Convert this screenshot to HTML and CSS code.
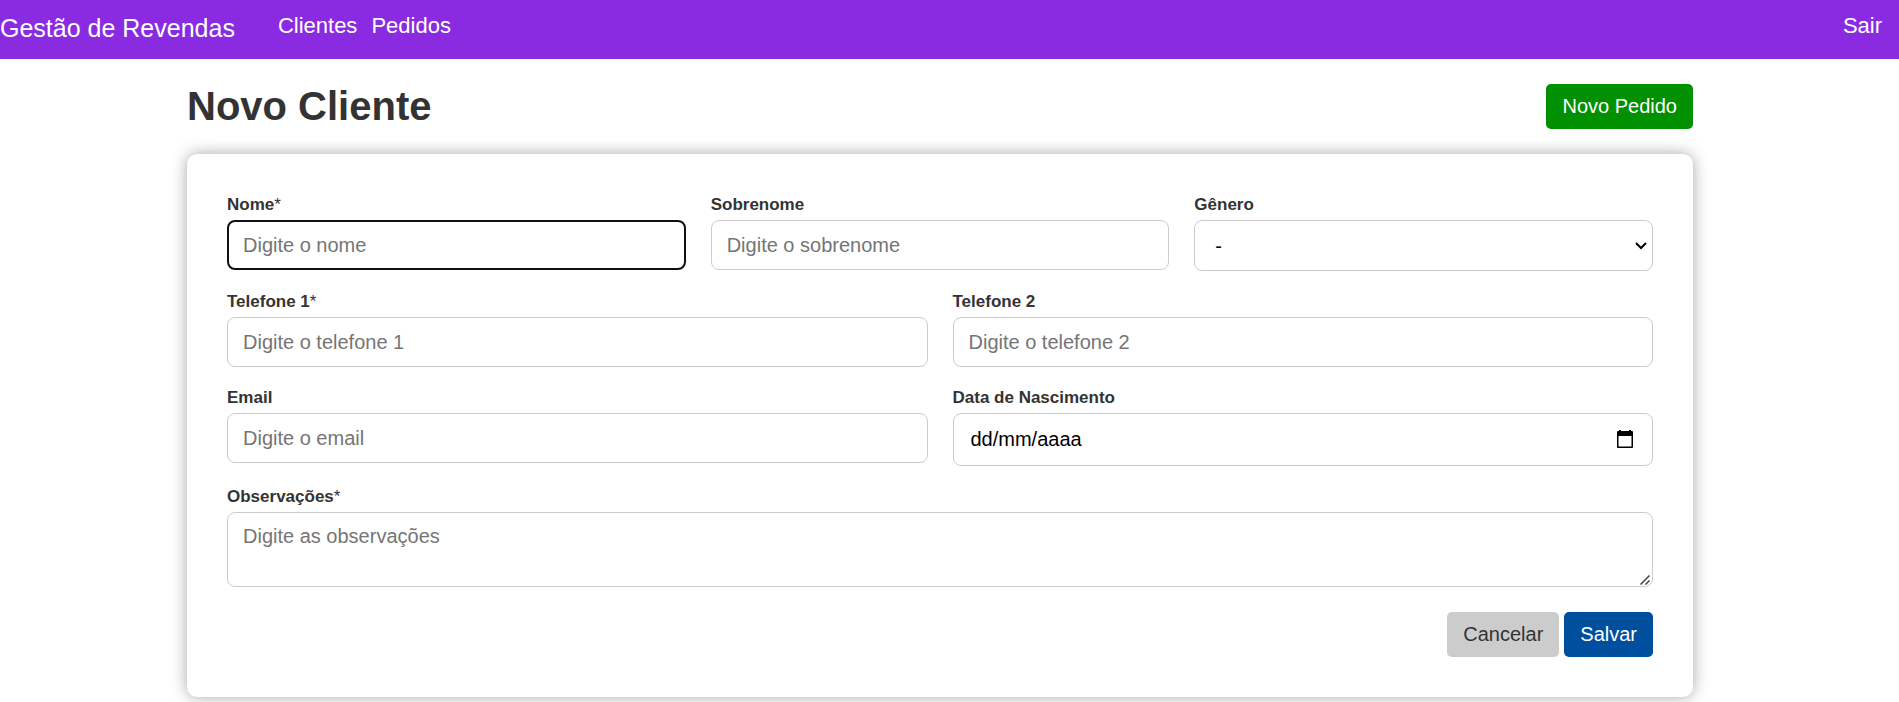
FILE: index.html
```html
<!DOCTYPE html>
<html lang="pt-BR">
<head>
<meta charset="utf-8">
<meta name="viewport" content="width=device-width, initial-scale=1">
<title>Gestão de Revendas</title>
<link rel="stylesheet" href="styles.css">
</head>
<body>
<header class="navbar">
  <a class="brand" href="#">Gestão de Revendas</a>
  <nav class="nav-links">
    <a href="#">Clientes</a>
    <a href="#">Pedidos</a>
  </nav>
  <a class="logout" href="#">Sair</a>
</header>
<div class="page">
<main class="container">
  <div class="page-head">
    <h1>Novo Cliente</h1>
    <button class="btn btn-green" type="button">Novo Pedido</button>
  </div>
  <form class="card">
    <div class="row">
      <div class="field">
        <label for="nome">Nome<span class="required">*</span></label>
        <input class="control active" id="nome" type="text" placeholder="Digite o nome">
      </div>
      <div class="field">
        <label for="sobrenome">Sobrenome</label>
        <input class="control" id="sobrenome" type="text" placeholder="Digite o sobrenome">
      </div>
      <div class="field">
        <label for="genero">Gênero</label>
        <div class="icon-box">
          <select class="control select" id="genero"><option>-</option></select>
          <svg class="chevron" viewBox="0 0 12 8" aria-hidden="true"><path d="M1 1l5 5 5-5" fill="none" stroke="#000" stroke-width="2"/></svg>
        </div>
      </div>
    </div>
    <div class="row">
      <div class="field">
        <label for="tel1">Telefone 1<span class="required">*</span></label>
        <input class="control" id="tel1" type="tel" placeholder="Digite o telefone 1">
      </div>
      <div class="field">
        <label for="tel2">Telefone 2</label>
        <input class="control" id="tel2" type="tel" placeholder="Digite o telefone 2">
      </div>
    </div>
    <div class="row">
      <div class="field">
        <label for="email">Email</label>
        <input class="control" id="email" type="email" placeholder="Digite o email">
      </div>
      <div class="field">
        <label for="nascimento">Data de Nascimento</label>
        <div class="icon-box">
          <input class="control date" id="nascimento" type="text" placeholder="dd/mm/aaaa">
          <svg class="calendar" viewBox="0 0 16 18" aria-hidden="true"><path fill="#000" fill-rule="evenodd" d="M2 0h2v1h8V0h2v1h1q1 0 1 1v15q0 1-1 1H1q-1 0-1-1V2q0-1 1-1h1zM1.500 6v10.500h13V6z"/></svg>
        </div>
      </div>
    </div>
    <div class="row">
      <div class="field">
        <label for="obs">Observações<span class="required">*</span></label>
        <div class="icon-box">
          <textarea class="control area" id="obs" rows="2" placeholder="Digite as observações"></textarea>
          <svg class="grip" viewBox="0 0 10 10" aria-hidden="true"><path d="M1 9l8-8M6 9l3-3" fill="none" stroke="#444" stroke-width="1.500" stroke-linecap="square"/></svg>
        </div>
      </div>
    </div>
    <div class="actions">
      <button class="btn btn-gray" type="button">Cancelar</button>
      <button class="btn btn-blue" type="submit">Salvar</button>
    </div>
  </form>
</main>
</div>
</body>
</html>
```
FILE: styles.css
```css
* {
  box-sizing: border-box;
}

body {
  min-height: 100vh;
  margin: 0;
  background: #fff;
  color: #333;
  font-family: "Liberation Sans", Arial, sans-serif;
  font-size: 20px;
}

.navbar {
  display: flex;
  align-items: center;
  height: 59px;
  padding: 0 17px 7px 0;
  background: #8a2be2;
}

.navbar a {
  color: #fff;
  font-size: 22px;
  line-height: 28px;
  text-decoration: none;
}

.navbar .brand {
  margin-right: 43px;
  padding-top: 3px;
  font-size: 25px;
}

.nav-links {
  display: flex;
  gap: 14px;
}

.logout {
  margin-left: auto;
}

.page {
  padding: 25px 19px 5px 0;
}

.container {
  max-width: 1506px;
  margin: 0 auto;
}

.page-head {
  display: flex;
  align-items: center;
  justify-content: space-between;
  margin-bottom: 25px;
}

h1 {
  margin: 0;
  font-size: 40px;
  line-height: 45px;
}

.btn {
  height: 45px;
  padding: 0 16px;
  border: 0;
  border-radius: 5px;
  color: #fff;
  font: inherit;
}

.btn-green {
  background: #009000;
}

.btn-blue {
  background: #004f9f;
}

.btn-gray {
  background: #ccc;
  color: #333;
}

.card {
  display: flex;
  flex-direction: column;
  gap: 20px;
  padding: 40px;
  border-radius: 10px;
  background: #fff;
  box-shadow: 0 0 16px rgba(0, 0, 0, 0.35);
}

.row {
  display: flex;
  gap: 25px;
}

.field {
  flex: 1;
  min-width: 0;
}

label {
  display: block;
  margin-bottom: 4px;
  font-size: 17px;
  font-weight: bold;
  line-height: 22px;
}

.required {
  font-weight: normal;
}

.control {
  display: block;
  width: 100%;
  height: 50px;
  padding: 0 15px;
  border: 1px solid #ccc;
  border-radius: 8px;
  background: #fff;
  color: #000;
  font: inherit;
}

.control::placeholder {
  color: #757575;
}

.control.active {
  padding: 0 14px;
  border: 2px solid #101010;
}

.icon-box {
  position: relative;
}

.control.select {
  height: 51px;
  padding: 0 20px;
  appearance: none;
}

.chevron {
  position: absolute;
  top: 22px;
  right: 6px;
  width: 12px;
  height: 8px;
  pointer-events: none;
}

.control.date {
  height: 53px;
  padding: 0 17px;
}

.control.date::placeholder {
  color: #000;
}

.calendar {
  position: absolute;
  top: 17px;
  right: 20px;
  width: 16px;
  height: 18px;
}

.control.area {
  height: 75px;
  padding: 12px 15px;
  resize: none;
}

.grip {
  position: absolute;
  right: 3px;
  bottom: 2px;
  width: 10px;
  height: 10px;
  pointer-events: none;
}

.actions {
  display: flex;
  justify-content: flex-end;
  gap: 5px;
  margin-top: 5px;
}
```
